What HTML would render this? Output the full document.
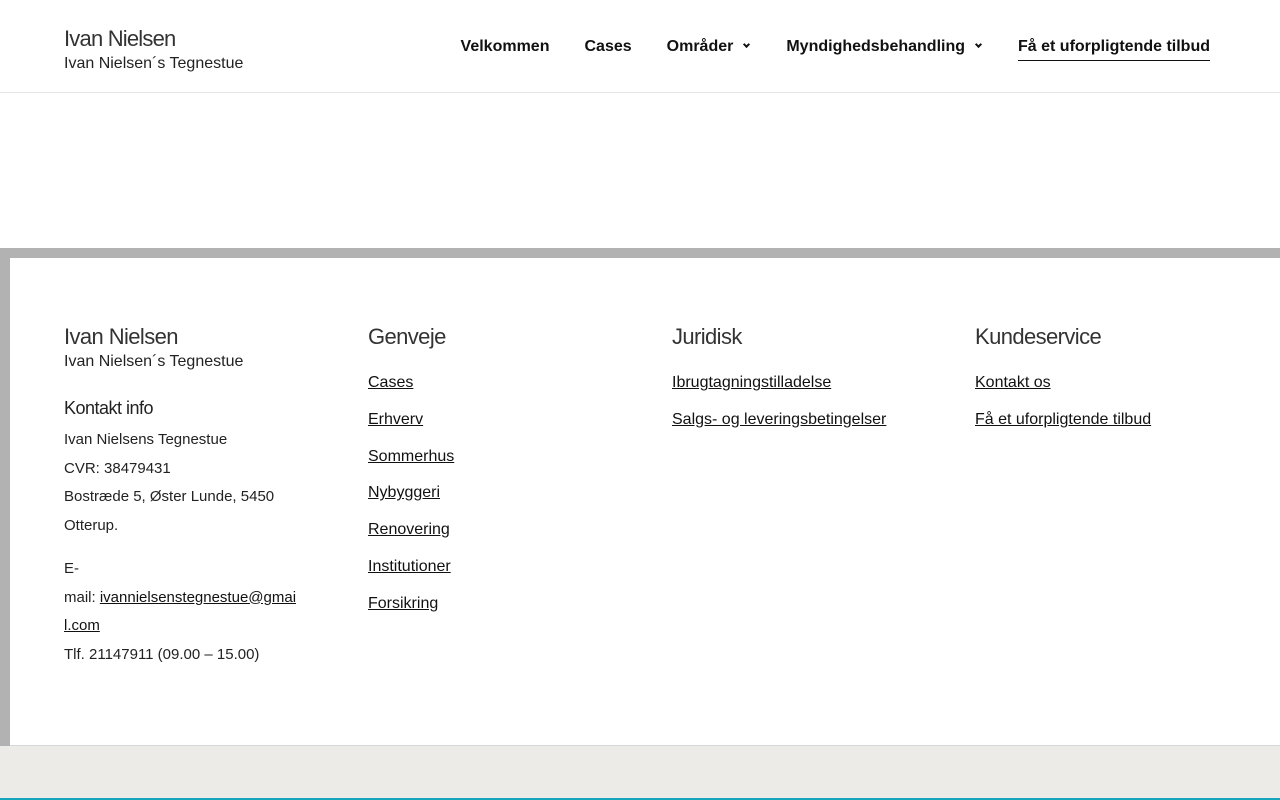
<!DOCTYPE html>
<html><head><meta charset="utf-8"><style>
*{margin:0;padding:0;box-sizing:border-box}
body{width:1280px;height:800px;overflow:hidden;font-family:"Liberation Sans",sans-serif;background:#fff;color:#111;position:relative}
header{height:93px;border-bottom:1px solid #e5e5e5;position:relative}
.logo{position:absolute;left:64px;top:26px}
.logo .t{font-size:22px;color:#333;letter-spacing:-0.8px;line-height:26px}
.logo .s{font-size:16px;color:#222;line-height:22px;margin-top:1px}
nav{position:absolute;right:70px;top:36px;display:flex;gap:35px;font-size:16px;font-weight:bold;color:#111}
nav span{line-height:22px}
nav .a{border-bottom:1px solid #111;padding-bottom:2px}
.chev{display:inline-block;width:5px;height:5px;border-right:2px solid #111;border-bottom:2px solid #111;transform:rotate(45deg);margin-left:11px;margin-right:2px;position:relative;top:-4px}
.frame{position:absolute;top:248px;left:0;width:1280px;height:498px;background:#b2b2b2}
.inner{position:absolute;top:10px;left:10px;right:0;bottom:0;background:#fff;border-bottom:1px solid #d8d8d8}
.bottom{position:absolute;top:746px;left:0;width:1280px;height:54px;background:#ecebe7;border-bottom:2px solid #17a5bd}
.col{position:absolute;top:325px}
.col h3{font-size:22px;font-weight:400;color:#333;letter-spacing:-0.6px;line-height:24px;margin-bottom:24px}
.col a{display:block;color:#111;text-decoration:underline;font-size:16px;line-height:20px;margin-bottom:16.8px}
.c1 .s{font-size:16px;line-height:22px;color:#222;margin-top:2px}
.c1 h4{font-size:18px;font-weight:normal;color:#222;letter-spacing:-0.5px;margin-top:25px;margin-bottom:7px}
.c1 p{font-size:15px;line-height:28.7px;color:#222}
.c1 a{display:inline;font-size:15px;margin:0}
</style></head><body>
<header>
<div class="logo"><div class="t">Ivan Nielsen</div><div class="s">Ivan Nielsen´s Tegnestue</div></div>
<nav><span>Velkommen</span><span>Cases</span><span>Områder<i class="chev"></i></span><span>Myndighedsbehandling<i class="chev"></i></span><span class="a">Få et uforpligtende tilbud</span></nav>
</header>
<div class="frame"><div class="inner"></div></div>
<div class="bottom"></div>
<div class="col c1" style="left:64px;width:245px">
<h3 style="margin-bottom:0">Ivan Nielsen</h3><div class="s">Ivan Nielsen´s Tegnestue</div>
<h4>Kontakt info</h4>
<p>Ivan Nielsens Tegnestue<br>CVR: 38479431<br>Bostræde 5, Øster Lunde, 5450 Otterup.</p>
<p style="margin-top:14px">E-<br>mail: <a>ivannielsenstegnestue@gmai l.com</a><br>Tlf. 21147911 (09.00 – 15.00)</p>
</div>
<div class="col" style="left:368px"><h3>Genveje</h3><a>Cases</a><a>Erhverv</a><a>Sommerhus</a><a>Nybyggeri</a><a>Renovering</a><a>Institutioner</a><a>Forsikring</a></div>
<div class="col" style="left:672px"><h3>Juridisk</h3><a>Ibrugtagningstilladelse</a><a>Salgs- og leveringsbetingelser</a></div>
<div class="col" style="left:975px"><h3>Kundeservice</h3><a>Kontakt os</a><a>Få et uforpligtende tilbud</a></div>
</body></html>
